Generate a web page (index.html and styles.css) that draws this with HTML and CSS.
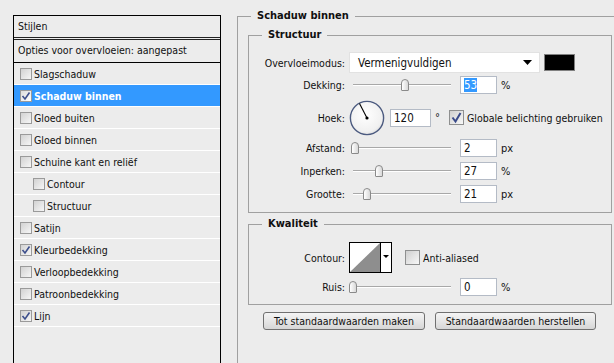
FILE: index.html
```html
<!DOCTYPE html>
<html lang="nl">
<head>
    <meta charset="UTF-8">
    <title>Laagstijl - Schaduw binnen</title>
    <link rel="stylesheet" href="styles.css">
</head>
<body>
    <div class="dialog">
        <aside class="styles-list">
            <div class="list-head">Stijlen</div>
            <div class="list-sub">Opties voor overvloeien: aangepast</div>
            <ul class="effects">
                <li><span class="cb"></span>Slagschaduw</li>
                <li class="selected"><span class="cb"><svg width="10" height="10" viewBox="0 0 10 10"><path d="M1.5 5 L4 8 L8.5 1.5" fill="none" stroke="#3d4f8c" stroke-width="1.6"/></svg></span>Schaduw binnen</li>
                <li><span class="cb"></span>Gloed buiten</li>
                <li><span class="cb"></span>Gloed binnen</li>
                <li><span class="cb"></span>Schuine kant en reliëf</li>
                <li class="sub"><span class="cb"></span>Contour</li>
                <li class="sub"><span class="cb"></span>Structuur</li>
                <li><span class="cb"></span>Satijn</li>
                <li><span class="cb"><svg width="10" height="10" viewBox="0 0 10 10"><path d="M1.5 5 L4 8 L8.5 1.5" fill="none" stroke="#3d4f8c" stroke-width="1.6"/></svg></span>Kleurbedekking</li>
                <li><span class="cb"></span>Verloopbedekking</li>
                <li><span class="cb"></span>Patroonbedekking</li>
                <li><span class="cb"><svg width="10" height="10" viewBox="0 0 10 10"><path d="M1.5 5 L4 8 L8.5 1.5" fill="none" stroke="#3d4f8c" stroke-width="1.6"/></svg></span>Lijn</li>
            </ul>
        </aside>

        <section class="panel">
            <fieldset class="outer">
                <legend>Schaduw binnen</legend>

                <fieldset class="group structure">
                    <legend>Structuur</legend>

                    <div class="row blend">
                        <span class="lbl">Overvloeimodus:</span>
                        <div class="select">
                            <span>Vermenigvuldigen</span>
                            <svg class="arrow" width="9" height="5" viewBox="0 0 9 5"><path d="M0 0 H9 L4.5 5 Z" fill="#000"/></svg>
                        </div>
                        <span class="swatch"></span>
                    </div>

                    <div class="row slide">
                        <span class="lbl">Dekking:</span>
                        <div class="slider"><span class="thumb" style="left: 53%"></span></div>
                        <span class="num"><span class="sel">53</span></span>
                        <span class="unit">%</span>
                    </div>

                    <div class="row angle">
                        <span class="lbl">Hoek:</span>
                        <svg class="dial" width="36" height="36" viewBox="0 0 36 36">
                            <defs>
                                <radialGradient id="dialFill" cx="45%" cy="40%" r="65%">
                                    <stop offset="0" stop-color="#ffffff"/>
                                    <stop offset="0.8" stop-color="#f0f0f0"/>
                                    <stop offset="1" stop-color="#d6d6d6"/>
                                </radialGradient>
                            </defs>
                            <circle cx="18" cy="18" r="16.6" fill="url(#dialFill)" stroke="#4c5b80" stroke-width="1.4"/>
                            <line x1="18" y1="18" x2="10.5" y2="3.5" stroke="#000" stroke-width="1.1"/>
                            <circle cx="18" cy="18" r="1.6" fill="#000"/>
                        </svg>
                        <span class="num wide">120</span>
                        <span class="unit deg">°</span>
                        <span class="check big on"><svg width="13" height="13" viewBox="0 0 13 13"><path d="M2.5 6.5 L5.5 10.5 L10.5 2" fill="none" stroke="#3a4b8a" stroke-width="2"/></svg></span>
                        <span class="check-text">Globale belichting gebruiken</span>
                    </div>

                    <div class="row slide gap4">
                        <span class="lbl">Afstand:</span>
                        <div class="slider"><span class="thumb" style="left: 2%"></span></div>
                        <span class="num">2</span>
                        <span class="unit">px</span>
                    </div>

                    <div class="row slide">
                        <span class="lbl">Inperken:</span>
                        <div class="slider"><span class="thumb" style="left: 27%"></span></div>
                        <span class="num">27</span>
                        <span class="unit">%</span>
                    </div>

                    <div class="row slide">
                        <span class="lbl">Grootte:</span>
                        <div class="slider"><span class="thumb" style="left: 14%"></span></div>
                        <span class="num">21</span>
                        <span class="unit">px</span>
                    </div>
                </fieldset>

                <fieldset class="group quality">
                    <legend>Kwaliteit</legend>

                    <div class="row contour">
                        <span class="lbl">Contour:</span>
                        <svg class="curve" width="43" height="31" viewBox="0 0 43 31">
                            <rect x="0.5" y="0.5" width="42" height="30" fill="#fff" stroke="#000"/>
                            <path d="M1 30 L31 1 V30 Z" fill="#8e8e8e"/>
                            <line x1="31.5" y1="0" x2="31.5" y2="31" stroke="#000"/>
                            <path d="M34 13 H40 L37 16 Z" fill="#000"/>
                        </svg>
                        <span class="check big"></span>
                        <span class="check-text">Anti-aliased</span>
                    </div>

                    <div class="row slide">
                        <span class="lbl">Ruis:</span>
                        <div class="slider"><span class="thumb" style="left: 0%"></span></div>
                        <span class="num">0</span>
                        <span class="unit">%</span>
                    </div>
                </fieldset>

                <div class="buttons">
                    <button class="btn">Tot standaardwaarden maken</button>
                    <button class="btn">Standaardwaarden herstellen</button>
                </div>
            </fieldset>
        </section>
    </div>
</body>
</html>
```
FILE: styles.css
```css
:root {
    --bg: #ececec;
    --line: #a0a0a0;
    --select: #3399ff;
    --text: #101010;
}

body {
    margin: 0;
    width: 614px;
    height: 363px;
    overflow: hidden;
    background-color: var(--bg);
    color: var(--text);
    font-family: Tahoma, "DejaVu Sans Condensed", "DejaVu Sans", sans-serif;
    font-size: 10.5px;
}

.dialog {
    display: flex;
    height: 363px;
}

/* left column with the effects */
.styles-list {
    flex: none;
    box-sizing: border-box;
    width: 208px;
    margin: 15px 0 0 13px;
    border: 1px solid #000;
    border-bottom: none;
}

.list-head {
    height: 21px;
    line-height: 21px;
    padding-left: 4px;
    border-bottom: 3px double #222;
}

.list-sub {
    height: 22px;
    line-height: 21px;
    padding-left: 4px;
    border-bottom: 1px solid #000;
}

.effects {
    list-style: none;
    margin: 0;
    padding: 0;
}

.effects li {
    display: flex;
    align-items: center;
    height: 21px;
    padding-left: 6px;
    border-bottom: 1px solid #fff;
}

.effects li.sub {
    padding-left: 19px;
}

.effects li.selected {
    background-color: var(--select);
    color: #fff;
    font-weight: bold;
}

.cb {
    flex: none;
    box-sizing: border-box;
    width: 12px;
    height: 12px;
    margin-right: 2px;
    border: 1px solid #9a9a9a;
    background: linear-gradient(135deg, #d2d2d2, #f6f6f6);
    display: flex;
    align-items: center;
    justify-content: center;
}

.selected .cb {
    background: linear-gradient(135deg, #dcdcdc, #ffffff);
}

/* right side */
.panel {
    flex: none;
    margin-left: 16px;
}

fieldset {
    margin: 0;
    border: 1px solid var(--line);
    min-width: 0;
}

legend {
    font-weight: bold;
    font-size: 11px;
    line-height: 14px;
    padding: 0 6px;
    margin-left: 3px;
}

.outer {
    box-sizing: border-box;
    width: 377px;
    height: 354px;
    margin-top: 9px;
    padding: 5px 0 0 10px;
    border-right: none;
    border-bottom: none;
}

.group {
    box-sizing: border-box;
    width: 364px;
    padding: 10px 0 9px 10px;
}

.quality {
    margin-top: 4px;
    padding: 11px 0 8px 10px;
}

.row {
    display: flex;
    align-items: center;
    height: 18px;
    margin-top: 5px;
}

.row .lbl {
    flex: none;
    width: 86px;
    margin-right: 4px;
    text-align: right;
}

.blend {
    height: 21px;
    margin-top: 0;
}

.structure .blend + .slide {
    margin-top: 3px;
}

.angle {
    height: 35px;
    margin-top: 6px;
}

.row.gap4 {
    margin-top: 4px;
}

.contour {
    height: 31px;
    margin-top: 0;
}

.select {
    box-sizing: border-box;
    width: 191px;
    height: 21px;
    display: flex;
    align-items: center;
    justify-content: space-between;
    padding: 0 7px 0 8px;
    background-color: #fff;
    border: 1px solid #e2e2e2;
    font-size: 11.5px;
}

.swatch {
    box-sizing: border-box;
    width: 31px;
    height: 17px;
    margin-left: 4px;
    background-color: #000;
    border: 1px solid #808080;
}

.slider {
    position: relative;
    flex: none;
    width: 98px;
    height: 2px;
    margin: 0 9px 0 4px;
    border-top: 1px solid #a8a8a8;
    border-bottom: 1px solid #fff;
    box-sizing: border-box;
}

.thumb {
    position: absolute;
    top: -6px;
    width: 8px;
    height: 12px;
    margin-left: -4px;
    box-sizing: border-box;
    border: 1px solid #8a8a8a;
    border-radius: 4px 4px 1px 1px;
    background: linear-gradient(to right, #ffffff, #d8d8d8);
}

.num {
    flex: none;
    box-sizing: border-box;
    width: 37px;
    height: 18px;
    line-height: 16px;
    padding-left: 3px;
    background-color: #fff;
    border: 1px solid #b4bbc6;
    font-size: 11.5px;
}

.num.wide {
    width: 41px;
    margin-left: 5px;
}

.sel {
    background-color: var(--select);
    color: #fff;
}

.unit {
    margin-left: 4px;
    font-size: 11px;
}

.unit.deg {
    margin-right: 9px;
}

.check {
    flex: none;
    box-sizing: border-box;
    width: 15px;
    height: 15px;
    margin-right: 3px;
    border: 1px solid #8e8f8f;
    background: linear-gradient(135deg, #cfcfcf, #f8f8f8);
    display: flex;
    align-items: center;
    justify-content: center;
}

.curve {
    margin-right: 13px;
}

.buttons {
    display: flex;
    gap: 10px;
    margin: 7px 0 0 15px;
}

.btn {
    box-sizing: border-box;
    width: 162px;
    height: 18px;
    padding: 0;
    font-family: inherit;
    font-size: 10.5px;
    white-space: nowrap;
    color: var(--text);
    border: 1px solid #707070;
    border-radius: 3px;
    background: linear-gradient(#f4f4f4, #e6e6e6 50%, #d6d6d6);
}

.btn + .btn {
    width: 161px;
}
```
